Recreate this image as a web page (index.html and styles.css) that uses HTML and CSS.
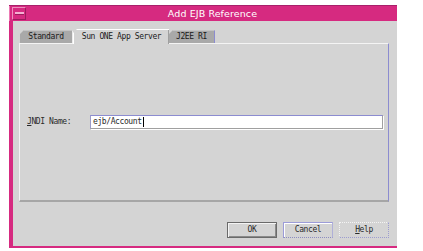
FILE: index.html
```html
<!DOCTYPE html>
<html lang="en">
    <head>
        <link rel="stylesheet" href="styles.css">
    </head>
    <body>
        <div class="window">
            <div class="titlebar">
                <div class="menu-btn"><span></span></div>
                <div class="title">Add EJB Reference</div>
            </div>
            <div class="client">
                <div class="tabs">
                    <div class="tab first">Standard</div>
                    <div class="tab selected">Sun ONE App Server</div>
                    <div class="tab last">J2EE RI</div>
                </div>
                <div class="panel">
                    <div class="field-label"><u>J</u>NDI Name:</div>
                    <div class="text-field">ejb/Account<span class="caret"></span></div>
                </div>
                <div class="buttons">
                    <div class="btn default">OK</div>
                    <div class="btn cancel">Cancel</div>
                    <div class="btn help"><u>H</u>elp</div>
                </div>
            </div>
        </div>
    </body>
</html>
```

FILE: styles.css
```css
body {
    background-color: white;
    margin: 0px;
    padding: 0px;
    font-family: "DejaVu Sans Mono", monospace;
    font-size: 8px;
    letter-spacing: -0.4px;
    color: #2a2a2a;
}

.window {
    margin: 5px 0 0 9px;
    width: 388px;
    display: flex;
    flex-direction: column;
}

.titlebar {
    height: 15px;
    border-top: 1px solid #a8206a;
    background-color: #d62a80;
    box-shadow: inset 1px 0 0 #ec7ab4;
    display: flex;
    align-items: center;
}

.menu-btn {
    width: 12px;
    height: 11px;
    margin-left: 3px;
    border: 1px solid #ee8fbf;
    border-right-color: #9c1c5e;
    border-bottom-color: #9c1c5e;
    display: flex;
    align-items: center;
    justify-content: center;
}

.menu-btn span {
    width: 9px;
    height: 2px;
    background-color: #f4b0d2;
    border-bottom: 1px solid #9c1c5e;
}

.title {
    flex: 1;
    text-align: center;
    color: white;
    font-family: "DejaVu Sans", sans-serif;
    font-size: 9.5px;
    letter-spacing: 0.1px;
    padding-left: 2px;
}

.client {
    background-color: #d4d4d4;
    border-left: 4px solid #d62a80;
    border-bottom: 2px solid #d62a80;
    padding: 7px 8px 8px 6px;
    display: flex;
    flex-direction: column;
}

.tabs {
    height: 15px;
    display: flex;
    align-items: flex-end;
    padding-left: 1px;
}

.tab {
    height: 12px;
    line-height: 12px;
    text-align: center;
    background-color: #a9a9a9;
    color: #1a1a1a;
    border-top: 1px solid #c4c4c4;
    clip-path: polygon(4px 0, 100% 0, 100% 100%, 0 100%, 0 4px);
}

.tab.first {
    width: 52px;
    border-right: 1px solid #ececec;
}

.tab.last {
    width: 45px;
    border-right: 1px solid #8c8cd0;
}

.tab.selected {
    width: 95px;
    height: 14px;
    line-height: 13px;
    background-color: #d4d4d4;
    border-top: 1px solid white;
    border-left: 1px solid white;
    box-shadow: inset -1px 0 0 #a0a0a0;
    margin-bottom: -1px;
}

.panel {
    height: 155px;
    border-top: 1px solid #f4f4f4;
    border-left: 1px solid #f4f4f4;
    border-right: 1px solid #8c8cd0;
    border-bottom: 2px solid #a6a6a6;
    display: flex;
    align-items: center;
    padding: 0 5px 1px 7px;
}

.field-label {
    width: 63px;
}

.field-label u {
    text-underline-offset: 1px;
}

.text-field {
    flex: 1;
    height: 12px;
    line-height: 12px;
    background-color: white;
    border-top: 1px solid #8c8cd0;
    border-left: 1px solid #9c9cc8;
    border-right: 1px solid #a0a0a0;
    border-bottom: 1px solid #a0a0a0;
    box-shadow: 1px 1px 0 white;
    padding-left: 2px;
    display: flex;
    align-items: center;
}

.caret {
    width: 1px;
    height: 10px;
    margin-left: 1px;
    background-color: black;
}

.buttons {
    margin-top: 20px;
    display: flex;
    justify-content: flex-end;
    gap: 6px;
}

.btn {
    width: 48px;
    height: 14px;
    line-height: 14px;
    text-align: center;
    border: 1px solid #a0a0a0;
}

.btn.default {
    border-color: #6a6a6a;
    box-shadow: inset 1px 1px 0 #f4f4f4, inset -1px -1px 0 #8a8a8a;
}

.btn.cancel {
    border-top-color: #9c9cd8;
    border-left-color: #9c9cd8;
    border-right-color: #b0b0d8;
    border-bottom: 1px dotted #8c8cc0;
    box-shadow: inset 1px 1px 0 white;
}

.btn.help {
    border: 1px dotted #9c9cd0;
    border-top-color: #f4f4f4;
    border-left-color: #f4f4f4;
}

.btn u {
    text-underline-offset: 1px;
}
```
